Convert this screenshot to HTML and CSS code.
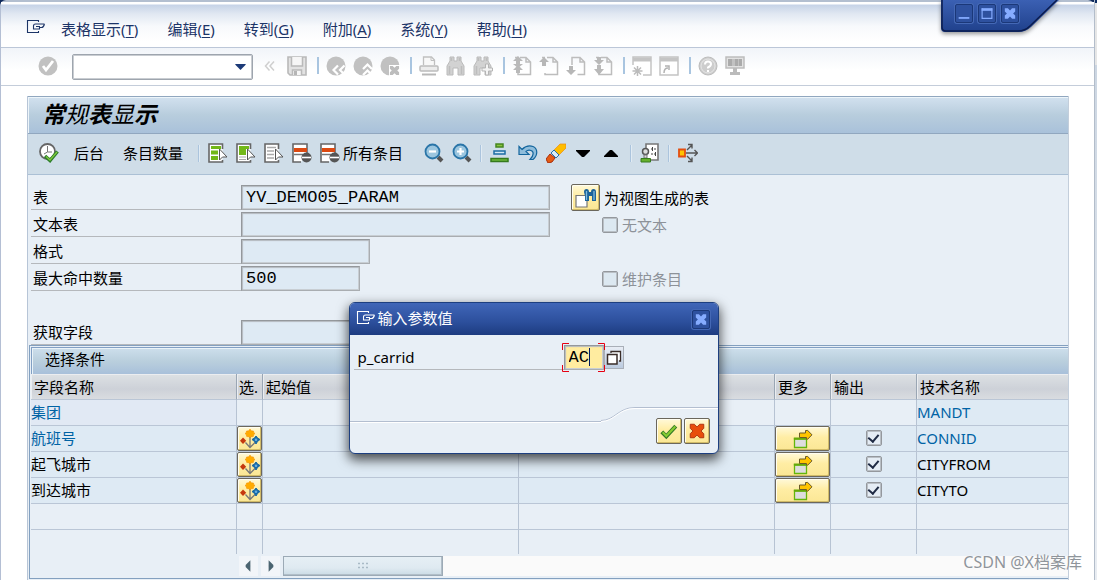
FILE: index.html
```html
<!DOCTYPE html>
<html lang="zh-CN">
<head>
<meta charset="utf-8">
<title>常规表显示</title>
<link rel="stylesheet" href="styles.css">
</head>
<body>
<svg class="symbols" aria-hidden="true">
  <symbol id="page" viewBox="0 0 20 20"><path d="M8 1.500h6l4.500 4.500v12.500H6V17M14 1.500v4.500h4.500M3 1.500h3" fill="none" stroke="#bdbdbd" stroke-width="1.500"/></symbol>
  <symbol id="ball" viewBox="0 0 20 20"><circle cx="10" cy="10" r="9.500" fill="#c1c1c1"/></symbol>
  <symbol id="binocs" viewBox="0 0 20 20"><path d="M4 1h4v4h3V1h4v4l3 5v9h-6v-7H7v7H1v-9l3-5z" fill="#d2d2d2" stroke="#bababa"/><path d="M5.500 2v3M13.500 2v3M3.500 10v8M15.500 10v8" stroke="#bdbdbd" stroke-width="1.500"/></symbol>
  <symbol id="x" viewBox="0 0 12 12"><path d="M1 1h3l2 2 2-2h3v3L9 6l2 2v3H8L6 9l-2 2H1V8l2-2-2-2z"/></symbol>
  <symbol id="hand" viewBox="0 0 20 16"><path d="M12.500 12v1.500h-11v-12h11V3M18.500 5H9.500q-2 0-2 2v3h6V8.500h2q2 0 3-3.500M10 7.500h4" fill="none" stroke="currentColor" stroke-width="1.100"/></symbol>
  <symbol id="pick" viewBox="0 0 20 20"><path d="M10 8v10M5.500 13.500l4.500 5 5-5" fill="none" stroke="#777" stroke-width="1.300"/><path d="M10 0l1.200 1.800 2.300.2.200 1.500 1.300 1-1.300 1.200-.4 1.800-2.300.2-1 1.300-1-1.300-2.300-.2-.4-1.800L5 4.500l1.300-1 .2-1.500 2.300-.2z" fill="#ffab00" stroke="#f08a00" stroke-width=".5"/><path d="M3 8.500l3.200 3.200L3 15l-3-3.300z" fill="#c5380e"/><path d="M16 7l1.500 2 2.500 1.500-2.500 2L16 15l-1.500-2.500-2.500-2L14.500 9z" fill="#1668a6" stroke="#1668a6"/><circle cx="16" cy="10.800" r="1.300" fill="#6aaee0"/></symbol>
  <symbol id="more" viewBox="0 0 20 20"><path d="M1.500 10h12v8.500h-12z" fill="#ddd" stroke="#64b50a" stroke-width="1.300"/><path d="M.8 9.500h13.400" stroke="#64a80a" stroke-width="2"/><path d="M6.500 4h6V1.500h2.200l4.300 4.300-4.300 4.400h-1.200V8.500h-7z" fill="#ffc400" stroke="#6b5b28"/></symbol>
  <symbol id="list" viewBox="0 0 20 20"><path d="M14.500 6V1H1v18h13.500v-2" fill="#fff" stroke="#666" stroke-width="1.600"/><path d="M11.500 6v11l3-3H19z" fill="#fff" stroke="#555"/></symbol>
  <symbol id="del" viewBox="0 0 20 20"><path d="M9 19H1V1h14v9" fill="#fff" stroke="#666" stroke-width="1.600"/><path d="M2 11.500h9" stroke="#777" stroke-width="1.500"/><path d="M2 5h13v4H2z" fill="#dc4a12"/><circle cx="14.500" cy="14.500" r="5" fill="#555"/><path d="M10 14.500h9" stroke="#fff" stroke-width="1.600"/></symbol>
  <symbol id="lens" viewBox="0 0 20 20"><path d="M14 14l4 4" stroke="#555" stroke-width="4"/><circle cx="8.500" cy="8.500" r="7" fill="#9cc6df" stroke="#2a75a8" stroke-width="1.800"/></symbol>
</svg>

<div class="desktop">
<main class="window">
  <nav class="menubar">
    <svg class="hand-icon" viewBox="0 0 20 16"><use href="#hand"/></svg>
    <button>表格显示(<u>T</u>)</button>
    <button>编辑(<u>E</u>)</button>
    <button>转到(<u>G</u>)</button>
    <button>附加(<u>A</u>)</button>
    <button>系统(<u>Y</u>)</button>
    <button>帮助(<u>H</u>)</button>
  </nav>

  <div class="window-tab">
    <svg class="tab-shape" viewBox="0 0 120 36">
      <defs><linearGradient id="tabfill" x2="0" y2="1"><stop offset="0" stop-color="#3b60b3"/><stop offset="1" stop-color="#1f408b"/></linearGradient></defs>
      <path d="M0 0v28q0 4 4 4h73q8 0 13-5L118 0z" fill="url(#tabfill)"/><path d="M1 0v27q0 4 4 4h72q7 0 12-5L116 0" fill="none" stroke="#0b1c4e" stroke-width="1.500"/>
    </svg>
    <div class="tab-buttons">
      <button class="wbtn" aria-label="最小化"><svg viewBox="0 0 18 18"><path d="M3 14h12" stroke="#86acff" stroke-width="2"/></svg></button>
      <button class="wbtn" aria-label="最大化"><svg viewBox="0 0 18 18"><path d="M3.500 3v11.500h11V3" fill="none" stroke="#86acff" stroke-width="1.300"/><path d="M3 4.500h12" stroke="#86acff" stroke-width="3"/></svg></button>
      <button class="wbtn" aria-label="关闭"><svg viewBox="0 0 18 18"><use href="#x" x="2" y="2" width="14" height="14" fill="#86acff"/></svg></button>
    </div>
  </div>

  <div class="toolbar">
    <button class="ic enter" aria-label="回车"><svg viewBox="0 0 20 20"><use href="#ball"/><path d="M5 10l3 4 7-9" fill="none" stroke="#fff" stroke-width="2.800"/></svg></button>
    <div class="command"><input type="text" aria-label="命令"><button aria-label="命令历史"><svg viewBox="0 0 12 7"><path d="M0 0h12v1L6 7 0 1z" fill="#1c3a78"/></svg></button></div>
    <button class="ic" aria-label="收起"><svg viewBox="0 0 20 20"><path d="M9.500 5.500L5.500 10l4 4.500M14 5.500L10 10l4 4.500" fill="none" stroke="#cfcfcf" stroke-width="1.500"/></svg></button>
    <button class="ic" aria-label="保存"><svg viewBox="0 0 20 20"><path d="M1 1h18v18H3l-2-2z" fill="#e2e2e2" stroke="#b9b9b9" stroke-width="1.600"/><path d="M4.500 1v9h11V1M5.500 19v-5h9v5" fill="#f6f6f6" stroke="#b9b9b9" stroke-width="1.500"/><path d="M7 15h3v4H7z" fill="#b5b5b5"/></svg></button>
    <span class="sep"></span>
    <button class="ic" aria-label="返回"><svg viewBox="0 0 20 20"><use href="#ball"/><path d="M12 9.500L7.500 14l4.500 4.500M18.500 9.500L14 14l4.500 4.500" fill="none" stroke="#fff" stroke-width="2.200"/></svg></button>
    <button class="ic" aria-label="退出"><svg viewBox="0 0 20 20"><use href="#ball"/><path d="M10 13l4.500-4.500L19 13M10 19l4.500-4.500L19 19" fill="none" stroke="#fff" stroke-width="2.200"/></svg></button>
    <button class="ic" aria-label="取消"><svg viewBox="0 0 20 20"><use href="#ball"/><path d="M9 9h11v11H9z" fill="#fff"/><use href="#x" x="9" y="9" width="11" height="11" fill="#bdbdbd"/></svg></button>
    <span class="sep"></span>
    <button class="ic" aria-label="打印"><svg viewBox="0 0 20 20"><path d="M4.500 9V1h8l3 3v5" fill="#f8f8f8" stroke="#c0c0c0" stroke-width="1.300"/><path d="M12 1v3.500h3.500" fill="none" stroke="#c0c0c0"/><rect x="1" y="10" width="18" height="5" rx="1" fill="#ececec" stroke="#bcbcbc" stroke-width="1.500"/><path d="M3 18.500h14" stroke="#b8b8b8" stroke-width="2"/></svg></button>
    <button class="ic" aria-label="查找"><svg viewBox="0 0 20 20"><use href="#binocs"/></svg></button>
    <button class="ic" aria-label="继续查找"><svg viewBox="0 0 20 20"><use href="#binocs"/><path d="M12.500 8h3v4h4v3h-4v4h-3v-4H9v-3h3.500z" fill="#f4f4f4" stroke="#b5b5b5"/></svg></button>
    <span class="sep"></span>
    <button class="ic" aria-label="第一页"><svg viewBox="0 0 20 20"><use href="#page"/><path d="M6 0l5 5H8v3h3l-5 4-5-4h3V5H1zM6 9l5 5H8v3H4v-3H1z" fill="#b9b9b9"/></svg></button>
    <button class="ic" aria-label="上一页"><svg viewBox="0 0 20 20"><use href="#page"/><path d="M5 1l5 5H7v4H3V6H0z" fill="#b7b7b7"/></svg></button>
    <button class="ic" aria-label="下一页"><svg viewBox="0 0 20 20"><path d="M6 9V1.500h8l4.500 4.500v12.500h-7M14 1.500v4.500h4.500" fill="none" stroke="#bdbdbd" stroke-width="1.500"/><path d="M3 10h4v4h3l-5 5-5-5h3z" fill="#b7b7b7"/></svg></button>
    <button class="ic" aria-label="最后一页"><svg viewBox="0 0 20 20"><use href="#page"/><path d="M4 1h4v3h3L6 9 1 4h3zM4 9h4v4h3l-5 6-5-6h3z" fill="#b9b9b9"/></svg></button>
    <span class="sep"></span>
    <button class="ic" aria-label="新建会话"><svg viewBox="0 0 20 20"><path d="M1 9V1h18v18h-8" fill="#fff" stroke="#c4c4c4" stroke-width="1.500"/><path d="M1 3.500h18" stroke="#c4c4c4" stroke-width="4"/><path d="M5.500 10v10M.5 15h10M2 11.500l7 7M9 11.500l-7 7" stroke="#bbb" stroke-width="1.500"/></svg></button>
    <button class="ic" aria-label="快捷方式"><svg viewBox="0 0 20 20"><path d="M1 1h18v18H1z" fill="#fff" stroke="#c4c4c4" stroke-width="1.500"/><path d="M1 3.500h18" stroke="#c4c4c4" stroke-width="4"/><path d="M5 17q0-5 4-5M6 10h4v4" fill="none" stroke="#b3b3b3" stroke-width="1.500"/></svg></button>
    <span class="sep"></span>
    <button class="ic" aria-label="帮助"><svg viewBox="0 0 20 20"><circle cx="10" cy="10" r="9" fill="#cdcdcd" stroke="#bcbcbc"/><circle cx="10" cy="10" r="7" fill="none" stroke="#e6e6e6"/><path d="M7 8.500q0-3 3-3t3 2.500q0 2-3 3.500v1M10 14v2" fill="none" stroke="#fff" stroke-width="2"/></svg></button>
    <button class="ic" aria-label="布局"><svg viewBox="0 0 20 20"><path d="M1 1h18v11H1z" fill="#e2e2e2" stroke="#bdbdbd" stroke-width="1.500"/><path d="M3 3h14v7H3z" fill="#ababab"/><path d="M7 3h3v7H7zM13 3h1v7h-1z" fill="#c2c2c2"/><path d="M8 12h4v4h3v3H5v-3h3z" fill="#bbb"/></svg></button>
  </div>

  <section class="panel">
    <h1 class="title">常<span>规</span>表<span>显</span>示</h1>
    <div class="appbar">
      <button class="ic" aria-label="执行"><svg viewBox="0 0 20 20"><circle cx="8.500" cy="8.500" r="7.500" fill="#fff" stroke="#666" stroke-width="1.800"/><path d="M8.500 3v6H13M8.500 9L5 11" fill="none" stroke="#777"/><path d="M6 13l5 4.500 7.500-9" fill="none" stroke="#2c7d2b" stroke-width="3.500"/><path d="M7 13.500l4 3.500 7-8" fill="none" stroke="#7fc83b" stroke-width="1.300"/></svg></button>
      <button class="word first">后台</button>
      <button class="word second">条目数量</button>
      <span class="bar"></span>
      <button class="ic" aria-label="全选"><svg viewBox="0 0 20 20"><use href="#list"/><path d="M3 3h10v3H3zM3 7.500h7v4H3zM3 13h7v4H3z" fill="#72b818"/></svg></button>
      <button class="ic" aria-label="选择块"><svg viewBox="0 0 20 20"><use href="#list"/><path d="M3 3h10v3h-3v6H3z" fill="#72b818"/><path d="M3 14h7M3 16.500h7" stroke="#aaa"/></svg></button>
      <button class="ic" aria-label="取消全选"><svg viewBox="0 0 20 20"><use href="#list"/><path d="M3 4.500h9M3 8h7M3 11.500h7M3 15h7" stroke="#aaa" stroke-width="1.500"/></svg></button>
      <button class="ic" aria-label="删除条目"><svg viewBox="0 0 20 20"><use href="#del"/></svg></button>
      <button class="with-text"><svg viewBox="0 0 20 20"><use href="#del"/></svg>所有条目</button>
      <button class="ic" aria-label="缩小"><svg viewBox="0 0 20 20"><use href="#lens"/><path d="M5 8.500h7" stroke="#fff" stroke-width="2.200"/></svg></button>
      <button class="ic" aria-label="放大"><svg viewBox="0 0 20 20"><use href="#lens"/><path d="M5 8.500h7M8.500 5v7" stroke="#fff" stroke-width="2.200"/></svg></button>
      <span class="bar"></span>
      <button class="ic" aria-label="层次"><svg viewBox="0 0 20 20"><path d="M6 1h7v3H6z" fill="#8ac63d" stroke="#46851f" stroke-width="1.500"/><path d="M4 8h11v3H4z" fill="#d2e8f5" stroke="#1b6ca4" stroke-width="1.500"/><path d="M1 15.500h17v3H1z" fill="#6cb83a" stroke="#357a1d" stroke-width="1.500"/></svg></button>
      <button class="ic" aria-label="撤销"><svg viewBox="0 0 20 20"><path d="M1 3.500l3 3q5-5 11-3c5 2 5 9 0 13h-3c4-4 4-8 1-9q-3-1-5 1l3 3H1z" fill="#8fbddb" stroke="#13659d" stroke-width="1.200"/></svg></button>
      <button class="ic" aria-label="清除"><svg viewBox="0 0 20 20"><path d="M14 1h6v4l-8 8-5-5z" fill="#ffbd00" stroke="#e98b13" stroke-width=".7"/><path d="M8 7l5 5-3 3-5-5z" fill="#d9ecf8" stroke="#2871a5"/><path d="M4 11l5 4-3 4-4 1-2-4z" fill="#e55b13" stroke="#a92d0b"/></svg></button>
      <button class="ic" aria-label="向下"><svg viewBox="0 0 20 20"><path d="M2 7h14v1l-6 6H8L2 8z"/></svg></button>
      <button class="ic" aria-label="向上"><svg viewBox="0 0 20 20"><path d="M2 14h14v-1l-6-6H8l-6 6z"/></svg></button>
      <span class="bar"></span>
      <button class="ic" aria-label="用户设置"><svg viewBox="0 0 20 20"><path d="M6 1h12v16H6z" fill="#fff" stroke="#777" stroke-width="1.600"/><path d="M11 6h2m1 0h2M11 11h2m1 0h2M12.500 4v4M15.500 9v4" stroke="#444"/><circle cx="5.500" cy="8.500" r="3" fill="#ddd" stroke="#555" stroke-width="1.500"/><path d="M4 12h3v3H4z" fill="#ddd" stroke="#777"/><path d="M1 15.500h9.500V19H1z" fill="#65af2c" stroke="#367b1c"/></svg></button>
      <span class="bar"></span>
      <button class="ic" aria-label="分发"><svg viewBox="0 0 20 20"><path d="M1 6.500h6v7H1z" fill="#ffc400" stroke="#e34e10" stroke-width="1.800"/><path d="M8 10h11M16.500 7l3 3-3 3M9 7l4.500-4.500M9 13l4.500 4.500M10 1.500h4v4M10 18.500h4v-4" fill="none" stroke="#555" stroke-width="1.400"/></svg></button>
    </div>

    <form class="form">
      <div class="row"><label for="f1">表</label><div class="field"><input id="f1" class="mono" value="YV_DEMO05_PARAM" readonly></div>
        <div class="side"><button type="button" class="gold view" aria-label="查看表"><svg viewBox="0 0 24 20"><path d="M2 7.500h11v11.500H2z" fill="#fff" stroke="#777" stroke-width="1.200"/><path d="M10 4q0-3 2.500-3T15 4h2q0-3 2.500-3T22 4v9h-4V8h-3v5h-4V8z" fill="#1b6299"/><path d="M12.500 3v9M20 3v9" stroke="#7fb9de" stroke-width="1.300"/></svg></button><span>为视图生成的表</span></div></div>
      <div class="row"><label for="f2">文本表</label><div class="field"><input id="f2" class="mono" readonly></div>
        <div class="side indent"><input type="checkbox" id="c1" disabled><label class="off" for="c1">无文本</label></div></div>
      <div class="row"><label for="f3">格式</label><div class="field"><input id="f3" class="mono medium" readonly></div></div>
      <div class="row"><label for="f4">最大命中数量</label><div class="field"><input id="f4" class="mono short" value="500" readonly></div>
        <div class="side indent"><input type="checkbox" id="c2" disabled><label class="off" for="c2">维护条目</label></div></div>
      <div class="row spaced"><label for="f5">获取字段</label><div class="field"><input id="f5" class="mono" readonly></div></div>
    </form>

    <section class="criteria">
      <h2>选择条件</h2>
      <table>
        <colgroup><col class="c-name"><col class="c-sel"><col class="c-val"><col class="c-val"><col class="c-more"><col class="c-out"><col></colgroup>
        <thead><tr><th>字段名称</th><th class="tight">选.</th><th>起始值</th><th>终止值</th><th>更多</th><th>输出</th><th>技术名称</th></tr></thead>
        <tbody>
          <tr class="key first-row"><td>集团</td><td></td><td></td><td></td><td></td><td></td><td>MANDT</td></tr>
          <tr class="key"><td>航班号</td><td><button class="gold cell" aria-label="选项"><svg viewBox="0 0 20 20"><use href="#pick"/></svg></button></td><td></td><td></td><td><button class="gold cell" aria-label="更多"><svg viewBox="0 0 20 20"><use href="#more"/></svg></button></td><td class="mid"><input type="checkbox" aria-label="输出 CONNID" checked></td><td>CONNID</td></tr>
          <tr><td>起飞城市</td><td><button class="gold cell" aria-label="选项"><svg viewBox="0 0 20 20"><use href="#pick"/></svg></button></td><td></td><td></td><td><button class="gold cell" aria-label="更多"><svg viewBox="0 0 20 20"><use href="#more"/></svg></button></td><td class="mid"><input type="checkbox" aria-label="输出 CITYFROM" checked></td><td>CITYFROM</td></tr>
          <tr><td>到达城市</td><td><button class="gold cell" aria-label="选项"><svg viewBox="0 0 20 20"><use href="#pick"/></svg></button></td><td></td><td></td><td><button class="gold cell" aria-label="更多"><svg viewBox="0 0 20 20"><use href="#more"/></svg></button></td><td class="mid"><input type="checkbox" aria-label="输出 CITYTO" checked></td><td>CITYTO</td></tr>
          <tr class="blank"><td></td><td></td><td></td><td></td><td></td><td></td><td></td></tr>
          <tr class="blank last"><td></td><td></td><td></td><td></td><td></td><td></td><td></td></tr>
        </tbody>
      </table>
      <div class="scroll">
        <button class="arrow" aria-label="向左滚动"><svg viewBox="0 0 20 20"><path d="M12 4v12L7 11V9z" fill="#4b6471"/></svg></button>
        <button class="arrow" aria-label="向右滚动"><svg viewBox="0 0 20 20"><path d="M8 4v12l5-5V9z" fill="#4b6471"/></svg></button>
        <div class="track"><div class="thumb"><svg viewBox="0 0 10 8"><path d="M0 1.500h2m2 0h2m2 0h2M0 5.500h2m2 0h2m2 0h2" stroke="#a9bac6" stroke-width="1.500"/></svg></div></div>
      </div>
    </section>
  </section>
</main>
<aside class="edge"></aside>
</div>

<section class="dialog" role="dialog" aria-labelledby="dlg">
  <header>
    <svg class="hand-icon" viewBox="0 0 20 16"><use href="#hand"/></svg>
    <h2 id="dlg">输入参数值</h2>
    <button class="wbtn" aria-label="关闭"><svg viewBox="0 0 18 18"><use href="#x" x="2" y="2" width="14" height="14" fill="#86acff"/></svg></button>
  </header>
  <div class="param">
    <label for="carrid">p_carrid</label>
    <div class="focus"><input id="carrid" class="mono" value="AC"><i class="caret"></i>
      <svg class="corners" viewBox="0 0 43 29"><path d="M.5 7V.5H7M36 .5h6.500V7M42.500 22v6.500H36M7 28.500H.5V22" fill="none" stroke="#e60012"/></svg></div>
    <button class="f4" aria-label="搜索帮助"><svg viewBox="0 0 16 16"><path d="M5 3V1.500h9.500V11H13" fill="#fff" stroke="#3a2d28" stroke-width="1.300"/><path d="M1.500 4.500h9.500V14H1.500z" fill="#fff" stroke="#3a2d28" stroke-width="1.500"/></svg></button>
  </div>
  <footer>
    <svg class="curve-start" viewBox="0 0 34 15"><path d="M0 13.500c14 0 17-13 34-13" fill="none" stroke="#b3bed0"/><path d="M0 14.500c14 0 17-13 34-13" fill="none" stroke="#fff"/></svg>
    <div class="actions">
      <button class="gold ok" aria-label="继续"><svg viewBox="0 0 20 20"><path d="M2 11l5 5L17.500 4.500" fill="none" stroke="#347927" stroke-width="4.500"/><path d="M3 11.500l4 4L17 5" fill="none" stroke="#86cc31" stroke-width="2.300"/></svg></button>
      <button class="gold ok" aria-label="取消"><svg viewBox="0 0 20 20"><use href="#x" x="1" y="1" width="18" height="18" fill="#e84f0c" stroke="#ac3210" stroke-width=".7"/></svg></button>
    </div>
  </footer>
</section>
<div class="watermark">CSDN @X档案库</div>
</body>
</html>
```
FILE: styles.css
```css
* { box-sizing: border-box; }
body {
  margin: 0;
  min-height: 100vh;
  overflow: hidden;
  position: relative;
  background: #0f2a5c;
  color: #000;
  font: 15px/20px "Noto Sans", "Noto Sans CJK SC", sans-serif;
}
button, input { font: inherit; color: inherit; margin: 0; padding: 0; }
button { border: 0; background: none; white-space: nowrap; }
svg { display: block; }
h1, h2 { margin: 0; font-weight: 400; }
.symbols { position: absolute; width: 0; height: 0; }

.desktop { display: flex; height: 100vh; overflow: hidden; }
.window {
  flex: 1;
  min-width: 0;
  position: relative;
  display: flex;
  flex-direction: column;
  background: #fff;
  border-left: 1px solid #b4bfd4;
  border-top: 2px solid #b3bfd0;
  border-radius: 6px 6px 0 0;
}
.edge {
  width: 3px;
  border-left: 1px solid #b3bdca;
  background: linear-gradient(#0d2d64 3px, #e6e6e6 3px, #e6e6e6 65px, #ccd6e2 65px, #e9edf2);
}

.menubar {
  display: flex;
  align-items: center;
  gap: 29px;
  height: 46px;
  padding: 8px 25px 0;
  color: #1c3467;
  background: linear-gradient(#fff 2px, #c6d3e7 3px, #e1e8f2 12px, #f7f9fc 24px, #fff 40px);
  border-bottom: 1px solid #bcc7d8;
}
.hand-icon { width: 20px; height: 16px; }
.menubar .hand-icon { margin: 0 -14px 4px 0; }
.menubar u { text-underline-offset: 2px; }

.window-tab { position: absolute; right: 33px; top: -2px; width: 120px; height: 36px; filter: drop-shadow(0 2px 2px #0006); }
.tab-shape { width: 120px; height: 36px; }
.tab-buttons { position: absolute; left: 14px; top: 4px; display: flex; gap: 5px; }
.wbtn { width: 18px; height: 19px; border: 1px solid #1b3879; border-radius: 2px; background: #2e519f; box-shadow: 0 0 0 1px #4468b5; }
.wbtn svg { width: 16px; height: 17px; }

.toolbar {
  display: flex;
  align-items: center;
  gap: 7px;
  height: 38px;
  padding: 0 37px 2px;
  background: linear-gradient(#f1f4f9, #fff 60%);
  border-bottom: 1px solid #c4cdda;
}
.ic, .ic svg { width: 20px; height: 20px; flex: none; }
.enter { margin-right: 7px; }
.command { display: flex; align-items: center; width: 181px; height: 26px; margin-top: 2px; padding-right: 6px; border: 1px solid #9ea5ae; border-radius: 2px; background: #fff; box-shadow: inset 0 0 0 1px #c9cdd2; }
.command input { flex: 1; min-width: 0; border: 0; outline: 0; background: none; }
.command svg { width: 11px; height: 6px; }
.sep { width: 5px; height: 17px; border-right: 2px solid #a9c5e0; }

.panel { flex: 1; display: flex; flex-direction: column; margin: 10px 25px 0 26px; background: #e8eff6; border-left: 1px solid #b7c5d7; border-right: 1px solid #c3cedb; }
.title {
  height: 38px;
  padding: 0 14px;
  border: solid #91a7bf;
  border-width: 1px 0 1px;
  box-shadow: inset 1px 1px #edf5fa;
  background: linear-gradient(#d2e1ef, #b8cddd 50%, #a9c1da);
  font: italic 700 23px/32px "Noto Sans CJK SC", sans-serif;
}
.title span { font-weight: 400; }
.appbar { display: flex; align-items: center; gap: 8px; height: 41px; padding: 0 11px 2px; background: #cfdde8; border-bottom: 1px solid #abc0d5; }
.word.first { margin-left: 7px; }
.word.second { margin: 0 7px 0 11px; }
.bar { width: 2px; height: 17px; background: #abc4dd; border-right: 1px solid #e1ebf3; }
.with-text { display: flex; align-items: center; gap: 3px; margin-right: 13px; }
.with-text svg { width: 20px; height: 20px; }

.form { display: flex; flex-direction: column; gap: 2px; padding: 10px 3px 0; }
.row { display: flex; height: 25px; }
.row > label { width: 210px; padding: 2px; border-bottom: 1px solid #b5b8bc; }
.spaced { margin-top: 27px; }
.field { width: 309px; margin-right: 21px; }
.mono { height: 25px; width: 100%; padding: 0 4px; border: 1px solid #94989c; border-bottom-color: #a9adb1; border-right-color: #a9adb1; outline: 0; background: #deeaf4; box-shadow: inset 1px 1px 1px #b4babf, inset -1px -1px #c8ced3; font: 17px/20px "Liberation Mono", monospace; display: block; }
.mono.medium { width: 129px; }
.mono.short { width: 119px; }
.side { display: flex; align-items: center; gap: 4px; height: 25px; }
.indent { padding-left: 31px; }
.off { color: #8d9299; }
.gold { display: grid; place-items: center; border: 1px solid #6b675c; border-radius: 2px; background: linear-gradient(#fff9d9, #ffeda4 45%, #fbe795); box-shadow: inset -1px -1px #d1bb68, inset 1px 1px #fffdf0; }
.view { width: 29px; height: 27px; }
.view svg { width: 24px; height: 20px; }
input[type="checkbox"] { appearance: none; width: 16px; height: 16px; border: 1px solid #94989d; border-radius: 2px; background: #dce8f1; box-shadow: inset 0 0 0 1px #b9bfc5; display: grid; place-items: center; }
input[type="checkbox"]:checked { background: #e5edf5; }
input[type="checkbox"]:checked::after { content: ""; width: 5px; height: 8px; margin-bottom: 2px; border: solid #1f2b44; border-width: 0 2px 2px 0; transform: rotate(40deg); }

.criteria { margin: 0 0 0 1px; border: 1px solid #83a0bf; border-right: 0; padding-left: 1px; }
.criteria h2 { height: 27px; margin-top: 1px; padding: 0 13px; border-top: 1px solid #82a0c4; border-left: 1px solid #82a0c4; background: linear-gradient(#cddfec, #bacfdd 50%, #a8c0da); font-size: 15px; line-height: 22px; box-shadow: inset 1px 1px #eaf3f8; }
table { width: 100%; table-layout: fixed; border-collapse: separate; border-spacing: 0; }
.c-name { width: 206px; }
.c-sel { width: 26px; }
.c-val { width: 256px; }
.c-more { width: 56px; }
.c-out { width: 86px; }
th, td { height: 26px; padding: 0 0 1px; border-right: 1px solid #b7c3d3; border-bottom: 1px solid #bac6d6; text-align: left; font-weight: 400; overflow: hidden; white-space: nowrap; line-height: 20px; }
th { padding: 0 3px; background: linear-gradient(#dde1e4, #cdd1d8 60%, #d9dce0); border-right-color: #9aa6b4; box-shadow: inset 1px 1px #ebedf0; }
th.tight { padding: 0 2px; }
th:last-child, td:last-child { border-right: 0; }
td { background: #deeaf4; }
td:has(button) { padding: 0; }
.first-row td { background: #e8eff6; }
.first-row td:first-child { background: #e1e9f4; }
.first-row td:last-child { background: #deeaf4; }
.key td { color: #0063a5; }
.blank td { background: #e8eff6; }
.last td { height: 24px; border-bottom: 0; }
.cell { width: 100%; height: 25px; }
.cell svg { width: 20px; height: 20px; }
.mid input { margin: 0 auto; }
.scroll { display: flex; gap: 3px; height: 24px; padding: 2px 0 2px 208px; }
.arrow { width: 19px; height: 20px; background: #f2f5f9; }
.arrow svg { width: 19px; height: 20px; }
.track { flex: 1; background: #fafafa; }
.thumb { display: grid; place-items: center; width: 160px; height: 20px; border: 1px solid #9caab6; background: linear-gradient(#e6eff5, #dfeaf1 60%, #cbdbe5); box-shadow: inset -1px -1px #b1bec8; }
.thumb svg { width: 10px; height: 8px; }

.dialog { position: absolute; left: calc(50% - 200px); top: 302px; width: 370px; background: #e8eff6; border: 1px solid #1d3f80; border-radius: 6px; box-shadow: 0 5px 12px 1px #000a; overflow: hidden; }
.dialog header { display: flex; align-items: center; height: 32px; padding: 0 8px 0 6px; color: #fff; background: linear-gradient(#4066b8, #2c4f9c 60%, #1d3c80); }
.dialog h2 { flex: 1; margin: 0 0 3px 2px; font-size: 15px; }
.dialog header .hand-icon { margin-bottom: 2px; }
.param { display: flex; padding: 10px 4px 0; height: 72px; }
.param label { width: 210px; height: 25px; padding: 2px 4px; border-bottom: 1px solid #b5b8bc; }
.focus { position: relative; width: 40px; height: 25px; }
.focus .mono { background: #ffeca0; padding: 0 4px; }
.caret { position: absolute; left: 25px; top: 3px; width: 1px; height: 18px; background: #001a60; }
.corners { position: absolute; left: -2px; top: -2px; width: 43px; height: 29px; }
.f4 { display: grid; place-items: center; width: 20px; height: 23px; margin-top: 1px; border: 1px solid #a9afb8; background: linear-gradient(#e8edf5, #bccbdf); }
.f4 svg { width: 16px; height: 16px; }
.dialog footer { display: flex; height: 46px; }
.dialog footer::before { content: ""; width: 251px; height: 14px; border-bottom: 1px solid #b3bed0; box-shadow: 0 1px #fff; }
.curve-start { width: 34px; height: 15px; }
.actions { flex: 1; display: flex; justify-content: flex-end; gap: 2px; padding: 10px 8px 0 0; border-top: 1px solid #b3bed0; box-shadow: inset 0 1px #fff; }
.ok { width: 26px; height: 26px; }
.ok svg { width: 18px; height: 18px; }
.watermark { position: absolute; right: 15px; bottom: 8px; color: #8f959b; font-size: 16px; text-shadow: 0 0 2px #fff; }
```
